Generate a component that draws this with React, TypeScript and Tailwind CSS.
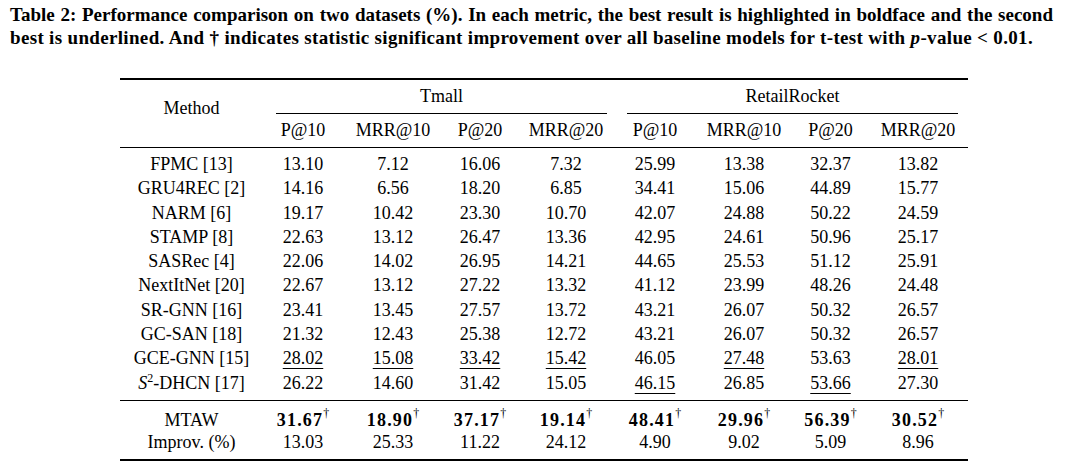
import React from "react";

type Cell = { v: string; u?: boolean };

interface Row {
  method: React.ReactNode;
  vals: Cell[];
}

const c = (v: string, u = false): Cell => ({ v, u });

const baselines: Row[] = [
  { method: "FPMC [13]", vals: ["13.10", "7.12", "16.06", "7.32", "25.99", "13.38", "32.37", "13.82"].map((v) => c(v)) },
  { method: "GRU4REC [2]", vals: ["14.16", "6.56", "18.20", "6.85", "34.41", "15.06", "44.89", "15.77"].map((v) => c(v)) },
  { method: "NARM [6]", vals: ["19.17", "10.42", "23.30", "10.70", "42.07", "24.88", "50.22", "24.59"].map((v) => c(v)) },
  { method: "STAMP [8]", vals: ["22.63", "13.12", "26.47", "13.36", "42.95", "24.61", "50.96", "25.17"].map((v) => c(v)) },
  { method: "SASRec [4]", vals: ["22.06", "14.02", "26.95", "14.21", "44.65", "25.53", "51.12", "25.91"].map((v) => c(v)) },
  { method: "NextItNet [20]", vals: ["22.67", "13.12", "27.22", "13.32", "41.12", "23.99", "48.26", "24.48"].map((v) => c(v)) },
  { method: "SR-GNN [16]", vals: ["23.41", "13.45", "27.57", "13.72", "43.21", "26.07", "50.32", "26.57"].map((v) => c(v)) },
  { method: "GC-SAN [18]", vals: ["21.32", "12.43", "25.38", "12.72", "43.21", "26.07", "50.32", "26.57"].map((v) => c(v)) },
  {
    method: "GCE-GNN [15]",
    vals: [c("28.02", true), c("15.08", true), c("33.42", true), c("15.42", true), c("46.05"), c("27.48", true), c("53.63"), c("28.01", true)],
  },
  {
    method: (
      <>
        <i>S</i>
        <sup className="text-[12px] -top-[7px]">2</sup>-DHCN [17]
      </>
    ),
    vals: [c("26.22"), c("14.60"), c("31.42"), c("15.05"), c("46.15", true), c("26.85"), c("53.66", true), c("27.30")],
  },
];

const ours = ["31.67", "18.90", "37.17", "19.14", "48.41", "29.96", "56.39", "30.52"];
const improv = ["13.03", "25.33", "11.22", "24.12", "4.90", "9.02", "5.09", "8.96"];
const metrics = ["P@10", "MRR@10", "P@20", "MRR@20"];
const widths = ["w-[143px]", "w-[80px]", "w-[100px]", "w-[74px]", "w-[98px]", "w-[80px]", "w-[98px]", "w-[75px]", "w-[100px]"];

function Num({ cell }: { cell: Cell }) {
  if (cell.u) return <span className="underline decoration-1 underline-offset-[4px]">{cell.v}</span>;
  return <>{cell.v}</>;
}

export default function App() {
  return (
    <div className="w-[1080px] h-[464px] bg-white text-black font-['Liberation_Serif',serif] overflow-hidden">
      {/* caption */}
      <div className="pl-[10px] pr-[27px] pt-[3px] text-[19px] leading-[23px] font-bold">
        <span className="block whitespace-nowrap text-justify [text-align-last:justify]">
          Table 2: Performance comparison on two datasets (%). In each metric, the best result is highlighted in boldface and the second
        </span>
        <span className="block whitespace-nowrap tracking-[0.33px]">
          best is underlined. And † indicates statistic significant improvement over all baseline models for t-test with{" "}
          <i>p</i>-value &lt; 0.01.
        </span>
      </div>

      {/* table */}
      <table className="ml-[120px] mt-[29px] w-[848px] table-fixed border-separate border-spacing-0 text-[18px] text-center">
        <colgroup>
          {widths.map((w, i) => (
            <col key={i} className={w} />
          ))}
        </colgroup>
        <thead className="font-normal">
          <tr>
            <th rowSpan={2} className="p-0 pt-[18px] align-top font-normal leading-[21px] border-t-2 border-b border-black">
              Method
            </th>
            <th colSpan={4} className="p-0 font-normal border-t-2 border-black">
              <div className="ml-[13px] mr-[8px] pt-[6px] pb-[6px] leading-[21px] border-b border-black">Tmall</div>
            </th>
            <th colSpan={4} className="p-0 font-normal border-t-2 border-black">
              <div className="ml-[12px] mr-[10px] pt-[6px] pb-[6px] leading-[21px] border-b border-black">RetailRocket</div>
            </th>
          </tr>
          <tr>
            {[...metrics, ...metrics].map((m, i) => (
              <th key={i} className="p-0 pt-[6px] pb-[6px] font-normal leading-[21px] border-b border-black">
                {m}
              </th>
            ))}
          </tr>
        </thead>
        <tbody className="leading-[24.3px]">
          {baselines.map((row, ri) => {
            const first = ri === 0;
            const last = ri === baselines.length - 1;
            const cls = `p-0 ${first ? "pt-[4px]" : ""} ${last ? "pb-[5px] border-b border-black" : ""}`;
            return (
              <tr key={ri}>
                <td className={cls}>{row.method}</td>
                {row.vals.map((v, i) => (
                  <td key={i} className={cls}>
                    <Num cell={v} />
                  </td>
                ))}
              </tr>
            );
          })}
        </tbody>
        <tbody className="leading-[22px]">
          <tr>
            <td className="p-0 pt-[8px]">MTAW</td>
            {ours.map((v, i) => (
              <td key={i} className="p-0 pt-[8px]">
                <b className="tracking-[1.2px]">{v}</b>
                <sup className="text-[12px] -top-[9px]">†</sup>
              </td>
            ))}
          </tr>
          <tr>
            <td className="p-0 pb-[6px] border-b-2 border-black">Improv. (%)</td>
            {improv.map((v, i) => (
              <td key={i} className="p-0 pb-[6px] border-b-2 border-black">
                {v}
              </td>
            ))}
          </tr>
        </tbody>
      </table>
    </div>
  );
}
